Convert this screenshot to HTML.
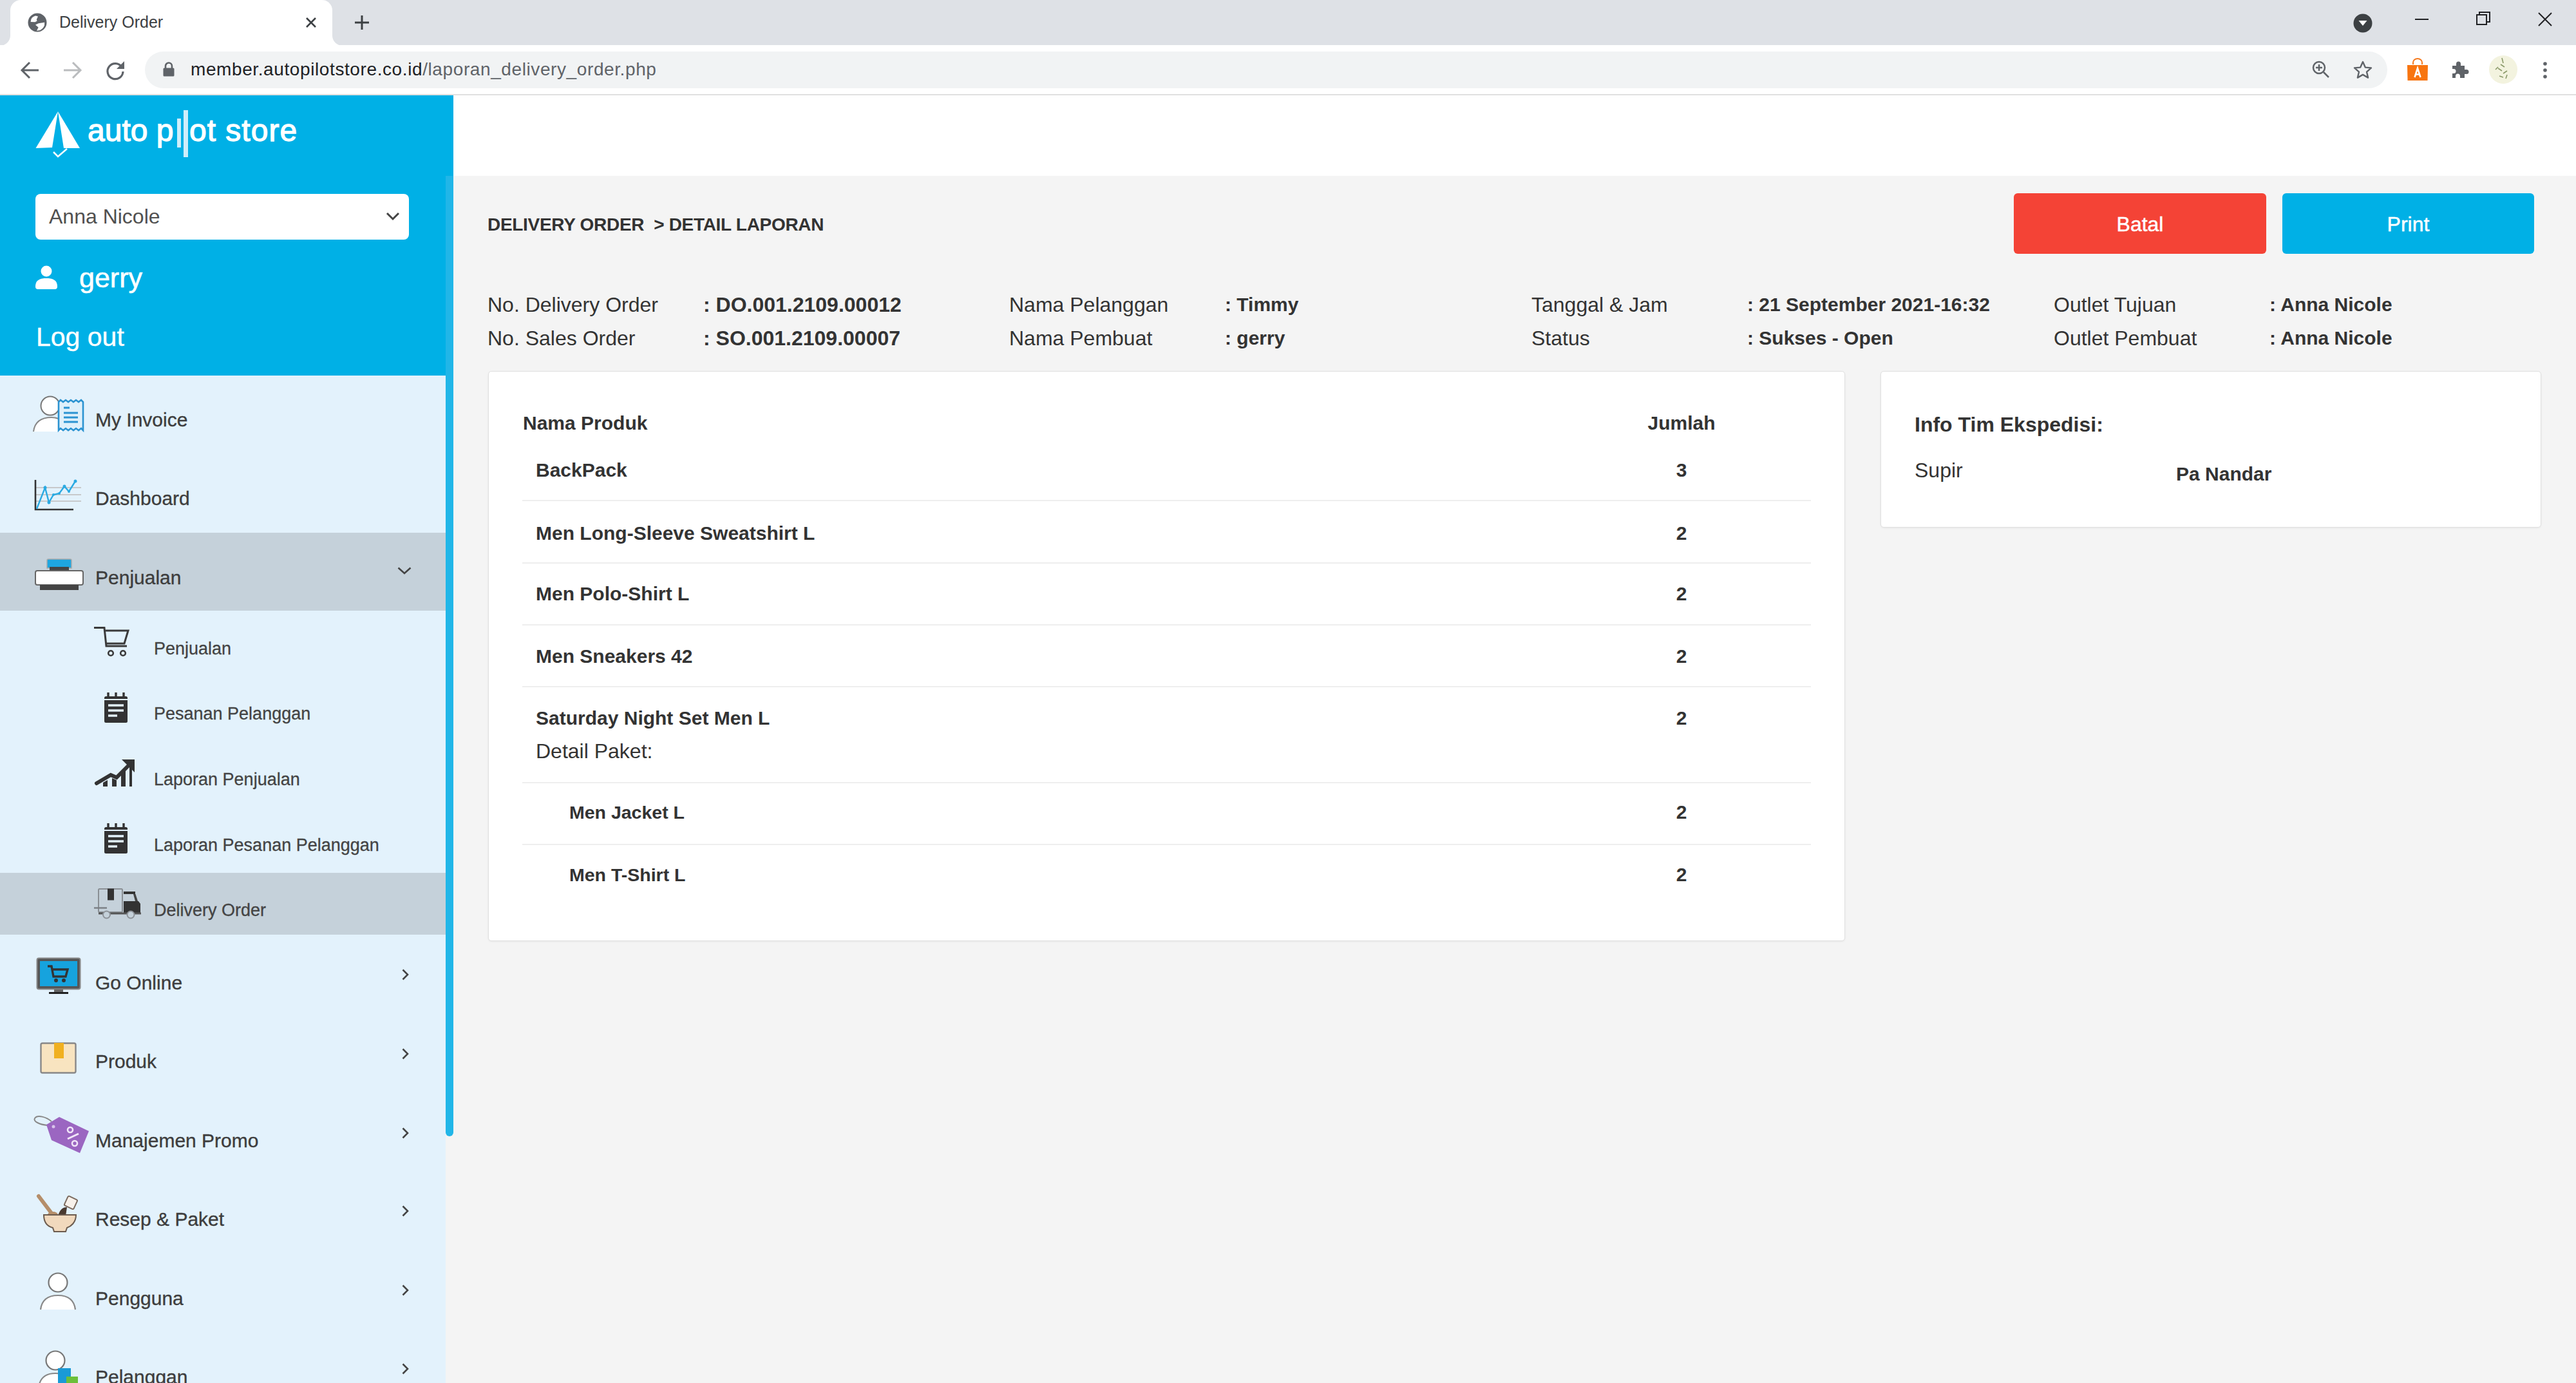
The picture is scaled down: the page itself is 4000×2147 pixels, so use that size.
<!DOCTYPE html><html><head><meta charset="utf-8"><title>Delivery Order</title><style>
*{margin:0;padding:0;box-sizing:border-box}
html,body{width:4000px;height:2147px;overflow:hidden;background:#f4f4f4;font-family:"Liberation Sans",sans-serif;position:relative}
.a{position:absolute}
.t{position:absolute;line-height:1;white-space:nowrap}
svg{position:absolute;overflow:visible}
</style></head><body>
<div class="a" style="left:0;top:0;width:4000px;height:70px;background:#dee1e6"></div>
<div class="a" style="left:16px;top:0;width:500px;height:71px;background:#fff;border-radius:16px 16px 0 0"></div>
<div class="a" style="left:0;top:54px;width:16px;height:17px;background:#fff"></div><div class="a" style="left:0;top:38px;width:16px;height:33px;background:#dee1e6;border-radius:0 0 16px 0"></div>
<div class="a" style="left:516px;top:54px;width:16px;height:17px;background:#fff"></div><div class="a" style="left:516px;top:38px;width:16px;height:33px;background:#dee1e6;border-radius:0 0 0 16px"></div>
<svg style="left:43px;top:20px" width="30" height="30" viewBox="0 0 30 30"><circle cx="15" cy="15" r="14.5" fill="#5f6368"/><path d="M4.6 14 L5.5 9.5 Q8 5.5 12.3 4.6 L16 5.6 L13.8 10.2 L14.6 12.6 L11.5 14.2 Z M12 18.6 L16.8 16.3 L26.2 14.8 L26 19.5 Q24 24.5 19 27 L14 27.8 L16.6 22.6 Z" fill="#fff"/></svg>
<div class="t" style="left:92px;top:22.3px;font-size:25px;color:#3c4043;">Delivery Order</div>
<svg style="left:474px;top:26px" width="18" height="18" viewBox="0 0 18 18"><path d="M2 2L16 16M16 2L2 16" stroke="#3c4043" stroke-width="2.6"/></svg>
<svg style="left:550px;top:23px" width="24" height="24" viewBox="0 0 24 24"><path d="M12 1V23M1 12H23" stroke="#3c4043" stroke-width="3"/></svg>
<svg style="left:3654px;top:21px" width="30" height="30" viewBox="0 0 30 30"><circle cx="15" cy="15" r="14.5" fill="#3c4043"/><path d="M8.5 11 H21.5 L15 19 Z" fill="#fff"/></svg>
<div class="a" style="left:3750px;top:29px;width:21px;height:2px;background:#202124"></div>
<svg style="left:3845px;top:18px" width="22" height="22" viewBox="0 0 22 22"><rect x="1" y="5" width="15" height="15" fill="none" stroke="#202124" stroke-width="2"/><path d="M5 5V1H21V16H16" fill="none" stroke="#202124" stroke-width="2"/></svg>
<svg style="left:3941px;top:19px" width="22" height="22" viewBox="0 0 22 22"><path d="M1 1L21 21M21 1L1 21" stroke="#202124" stroke-width="2"/></svg>
<div class="a" style="left:0;top:70px;width:4000px;height:77px;background:#fff"></div>
<div class="a" style="left:0;top:146px;width:4000px;height:2px;background:#e0e0e0"></div>
<svg style="left:31px;top:94px" width="30" height="30" viewBox="0 0 30 30"><path d="M29 15H3M15 3L3 15L15 27" fill="none" stroke="#5f6368" stroke-width="3"/></svg>
<svg style="left:98px;top:94px" width="30" height="30" viewBox="0 0 30 30"><path d="M1 15H27M15 3L27 15L15 27" fill="none" stroke="#babcbe" stroke-width="3"/></svg>
<svg style="left:164px;top:93px" width="30" height="32" viewBox="0 0 30 32"><path d="M25 11 A12 12 0 1 0 27 18" fill="none" stroke="#5f6368" stroke-width="3.2"/><path d="M29 2 V14 H17 Z" fill="#5f6368"/></svg>
<div class="a" style="left:225px;top:80px;width:3482px;height:57px;background:#f1f3f4;border-radius:29px"></div>
<svg style="left:253px;top:96px" width="18" height="23" viewBox="0 0 18 23"><path d="M4 10V6.5A5 5 0 0 1 14 6.5V10" fill="none" stroke="#5f6368" stroke-width="2.6"/><rect x="0.5" y="9.5" width="17" height="13" rx="1.5" fill="#5f6368"/></svg>
<div class="t" style="left:296px;top:94.3px;font-size:28px;letter-spacing:0.6px;color:#202124">member.autopilotstore.co.id<span style="color:#5f6368">/laporan_delivery_order.php</span></div>
<svg style="left:3590px;top:94px" width="28" height="28" viewBox="0 0 28 28"><circle cx="11" cy="11" r="9" fill="none" stroke="#5f6368" stroke-width="2.5"/><path d="M18 18L26 26M11 6V16M6 11H16" stroke="#5f6368" stroke-width="2.5"/></svg>
<svg style="left:3654px;top:94px" width="30" height="28" viewBox="0 0 30 28"><path d="M15 2L18.8 10.6L28 11.4L21 17.6L23.1 26.6L15 21.9L6.9 26.6L9 17.6L2 11.4L11.2 10.6Z" fill="none" stroke="#5f6368" stroke-width="2.4" stroke-linejoin="round"/></svg>
<svg style="left:3737px;top:91px" width="34" height="35" viewBox="0 0 34 35"><path d="M10 9V6A7 6 0 0 1 24 6V9" fill="none" stroke="#f57a1f" stroke-width="2"/><path d="M1 10H33L32.5 34H1.5Z" fill="#f87510"/><path d="M12.5 29L17 15L21.5 29M14 24.5H20" fill="none" stroke="#fff" stroke-width="2.6"/></svg>
<svg style="left:3805px;top:93px" width="30" height="30" viewBox="0 0 30 30"><path d="M3 9H9V6A3.5 3.5 0 0 1 16 6V9H22V15H25A3.5 3.5 0 0 1 25 22H22V28H15V25A3.5 3.5 0 0 0 8 25V28H3V21H5A3.5 3.5 0 0 0 5 14H3Z" fill="#5f6368"/></svg>
<div class="a" style="left:3865px;top:86px;width:44px;height:44px;border-radius:50%;background:#f3f3df"></div>
<svg style="left:3865px;top:86px" width="44" height="44" viewBox="0 0 44 44"><path d="M20 4L22 12M18 14L24 18M14 20L20 24M22 28L28 24M16 32L22 34M26 36L28 30M10 22L14 18" stroke="#8b9a6a" stroke-width="1.6"/></svg>
<svg style="left:3947px;top:95px" width="10" height="28" viewBox="0 0 10 28"><circle cx="5" cy="4" r="2.8" fill="#5f6368"/><circle cx="5" cy="14" r="2.8" fill="#5f6368"/><circle cx="5" cy="24" r="2.8" fill="#5f6368"/></svg>
<div class="a" style="left:704px;top:148px;width:3296px;height:125px;background:#fff"></div>
<div class="a" style="left:0;top:148px;width:704px;height:435px;background:#00b0e6"></div>
<div class="a" style="left:0;top:583px;width:692px;height:1564px;background:#e3f2fc"></div>
<div class="a" style="left:692px;top:273px;width:12px;height:1491px;background:#21b6e8;border-radius:0 0 6px 6px"></div>
<svg style="left:55px;top:172px" width="70" height="72" viewBox="0 0 70 72"><path d="M35 1 L69 58 L44 58 Z" fill="#fff"/><path d="M35 1 L26 57 L0.5 58 Z" fill="#fff"/><path d="M28 64 L35 71 L49 59" fill="none" stroke="#fff" stroke-width="2.5"/></svg>
<div class="t" style="left:136px;top:179px;font-size:48px;color:#fff;-webkit-text-stroke:1.3px #fff">auto p</div>
<div class="a" style="left:274.5px;top:183.5px;width:6px;height:45.5px;background:#cfeefa"></div>
<div class="a" style="left:285px;top:171px;width:6.5px;height:73px;background:#cfeefa"></div>
<div class="t" style="left:294px;top:179px;font-size:48px;letter-spacing:1px;color:#fff;-webkit-text-stroke:1.3px #fff">ot store</div>
<div class="a" style="left:55px;top:301px;width:580px;height:71px;background:#fff;border-radius:8px"></div>
<div class="t" style="left:76px;top:320.4px;font-size:32px;color:#505050;">Anna Nicole</div>
<svg style="left:599px;top:329px" width="22" height="14" viewBox="0 0 22 14"><path d="M2 2L11 11L20 2" fill="none" stroke="#444" stroke-width="3"/></svg>
<svg style="left:55px;top:412px" width="34" height="38" viewBox="0 0 34 38"><circle cx="17" cy="9" r="8.5" fill="#fff"/><path d="M0 33 C0 22 8 20 17 20 C26 20 34 22 34 33 Q34 37 30 37 H4 Q0 37 0 33Z" fill="#fff"/></svg>
<div class="t" style="left:123px;top:409.6px;font-size:43px;color:#fff;-webkit-text-stroke:0.6px #fff;">gerry</div>
<div class="t" style="left:56px;top:502.8px;font-size:41px;color:#fff;-webkit-text-stroke:0.4px #fff;">Log out</div>
<div class="a" style="left:0;top:827px;width:692px;height:121px;background:#c5d1da"></div>
<div class="a" style="left:0;top:1355px;width:692px;height:96px;background:#c5d1da"></div>
<div class="t" style="left:148px;top:637.2px;font-size:30px;color:#3d3d3d;-webkit-text-stroke:0.35px #3d3d3d;">My Invoice</div>
<div class="t" style="left:148px;top:759.1px;font-size:30px;color:#3d3d3d;-webkit-text-stroke:0.35px #3d3d3d;">Dashboard</div>
<div class="t" style="left:148px;top:881.6px;font-size:30px;color:#3d3d3d;-webkit-text-stroke:0.35px #3d3d3d;">Penjualan</div>
<div class="t" style="left:239px;top:994.1px;font-size:27px;color:#444;-webkit-text-stroke:0.3px #444;">Penjualan</div>
<div class="t" style="left:239px;top:1095.1px;font-size:27px;color:#444;-webkit-text-stroke:0.3px #444;">Pesanan Pelanggan</div>
<div class="t" style="left:239px;top:1197.1px;font-size:27px;color:#444;-webkit-text-stroke:0.3px #444;">Laporan Penjualan</div>
<div class="t" style="left:239px;top:1299.1px;font-size:27px;color:#444;-webkit-text-stroke:0.3px #444;">Laporan Pesanan Pelanggan</div>
<div class="t" style="left:239px;top:1400.1px;font-size:27px;color:#444;-webkit-text-stroke:0.3px #444;">Delivery Order</div>
<div class="t" style="left:148px;top:1510.6px;font-size:30px;color:#3d3d3d;-webkit-text-stroke:0.35px #3d3d3d;">Go Online</div>
<div class="t" style="left:148px;top:1632.6px;font-size:30px;color:#3d3d3d;-webkit-text-stroke:0.35px #3d3d3d;">Produk</div>
<div class="t" style="left:148px;top:1755.6px;font-size:30px;color:#3d3d3d;-webkit-text-stroke:0.35px #3d3d3d;">Manajemen Promo</div>
<div class="t" style="left:148px;top:1877.6px;font-size:30px;color:#3d3d3d;-webkit-text-stroke:0.35px #3d3d3d;">Resep &amp; Paket</div>
<div class="t" style="left:148px;top:2000.6px;font-size:30px;color:#3d3d3d;-webkit-text-stroke:0.35px #3d3d3d;">Pengguna</div>
<div class="t" style="left:148px;top:2122.6px;font-size:30px;color:#3d3d3d;-webkit-text-stroke:0.35px #3d3d3d;">Pelanggan</div>
<svg style="left:617px;top:880px" width="22" height="12" viewBox="0 0 22 12"><path d="M1.5 1.5L11 10L20.5 1.5" fill="none" stroke="#444" stroke-width="2.6"/></svg>
<svg style="left:624px;top:1504px" width="12" height="18" viewBox="0 0 12 18"><path d="M1.5 1.5L9 9L1.5 16.5" fill="none" stroke="#444" stroke-width="2.6"/></svg>
<svg style="left:624px;top:1627px" width="12" height="18" viewBox="0 0 12 18"><path d="M1.5 1.5L9 9L1.5 16.5" fill="none" stroke="#444" stroke-width="2.6"/></svg>
<svg style="left:624px;top:1750px" width="12" height="18" viewBox="0 0 12 18"><path d="M1.5 1.5L9 9L1.5 16.5" fill="none" stroke="#444" stroke-width="2.6"/></svg>
<svg style="left:624px;top:1871px" width="12" height="18" viewBox="0 0 12 18"><path d="M1.5 1.5L9 9L1.5 16.5" fill="none" stroke="#444" stroke-width="2.6"/></svg>
<svg style="left:624px;top:1994px" width="12" height="18" viewBox="0 0 12 18"><path d="M1.5 1.5L9 9L1.5 16.5" fill="none" stroke="#444" stroke-width="2.6"/></svg>
<svg style="left:624px;top:2116px" width="12" height="18" viewBox="0 0 12 18"><path d="M1.5 1.5L9 9L1.5 16.5" fill="none" stroke="#444" stroke-width="2.6"/></svg>
<svg style="left:50px;top:612px" width="84" height="62" viewBox="0 0 84 62"><circle cx="28" cy="18" r="14.5" fill="#fff" stroke="#777" stroke-width="2"/><path d="M2 58 C4 42 14 36 30 36 C40 36 46 40 48 44 L48 58 Z" fill="#fff"/><path d="M2 58 C4 42 14 36 30 36 C38 36 44 39 47 43" fill="none" stroke="#888" stroke-width="2"/><path d="M41 12 L44 9 L48 12 L52 9 L56 12 L60 9 L64 12 L68 9 L72 12 L76 9 L79 12 L79 56 L76 53 L72 56 L68 53 L64 56 L60 53 L56 56 L52 53 L48 56 L44 53 L41 56 Z" fill="#dff0fa" stroke="#2b93d1" stroke-width="2.6"/><path d="M49 21H58M49 29H71M49 36H71M49 43H71" stroke="#2b93d1" stroke-width="3"/></svg>
<svg style="left:52px;top:743px" width="78" height="52" viewBox="0 0 78 52"><path d="M4 14H74M4 25H74M4 35H74" stroke="#c7c9cb" stroke-width="2"/><path d="M3 2V48H62" fill="none" stroke="#333" stroke-width="2.6"/><path d="M5 47L18 14L24 37L31 25L40 23L48 12L55 20L65 4" fill="none" stroke="#2aaae2" stroke-width="2.4"/><g fill="#2aaae2"><circle cx="18" cy="14" r="2.5"/><circle cx="24" cy="37" r="2.5"/><circle cx="31" cy="25" r="2"/><circle cx="40" cy="23" r="2"/><circle cx="48" cy="12" r="2.5"/><circle cx="55" cy="20" r="2"/><circle cx="65" cy="4" r="2.5"/></g></svg>
<svg style="left:53px;top:866px" width="78" height="52" viewBox="0 0 78 52"><path d="M20 4 Q20 2 22 2 H56 Q58 2 58 4 V16 H20Z" fill="#1ea6e0" stroke="#aaa" stroke-width="1.5"/><rect x="24" y="14" width="30" height="6" fill="#444"/><rect x="2" y="20" width="74" height="22" rx="3" fill="#fff" stroke="#666" stroke-width="2"/><rect x="9" y="42" width="60" height="8" fill="#444"/></svg>
<svg style="left:145px;top:972px" width="58" height="48" viewBox="0 0 58 48"><path d="M1 2.5H17L20 31H52" fill="none" stroke="#3a3a3a" stroke-width="3"/><path d="M19 7H54L48 27H21" fill="none" stroke="#3a3a3a" stroke-width="3"/><circle cx="27" cy="42" r="3.8" fill="none" stroke="#3a3a3a" stroke-width="2.6"/><circle cx="46" cy="42" r="3.8" fill="none" stroke="#3a3a3a" stroke-width="2.6"/></svg>
<svg style="left:161px;top:1075px" width="38" height="48" viewBox="0 0 38 48"><rect x="1" y="6" width="36" height="41" rx="2.5" fill="#333"/><path d="M7 0V10M19 0V10M31 0V10" stroke="#333" stroke-width="3.4"/><path d="M1 11H37" stroke="#e3f2fc" stroke-width="2"/><path d="M7 20H31M7 28H31M7 36H21" stroke="#e3f2fc" stroke-width="3.6"/></svg>
<svg style="left:147px;top:1176px" width="64" height="46" viewBox="0 0 64 46"><path d="M3 40L25 27L34 31L56 9" fill="none" stroke="#333" stroke-width="6" stroke-linecap="round"/><path d="M42 3H62V23Z" fill="#333"/><path d="M13 45V39L20 35V45ZM27 45V32L34 35V45ZM41 45V27L48 20V45ZM54 45V15L58 11V45Z" fill="#333"/></svg>
<svg style="left:161px;top:1278px" width="38" height="48" viewBox="0 0 38 48"><rect x="1" y="6" width="36" height="41" rx="2.5" fill="#333"/><path d="M7 0V10M19 0V10M31 0V10" stroke="#333" stroke-width="3.4"/><path d="M1 11H37" stroke="#e3f2fc" stroke-width="2"/><path d="M7 20H31M7 28H31M7 36H21" stroke="#e3f2fc" stroke-width="3.6"/></svg>
<svg style="left:145px;top:1377px" width="76" height="52" viewBox="0 0 76 52"><rect x="8" y="3" width="37" height="36" rx="1.5" fill="none" stroke="#8a8f94" stroke-width="2"/><rect x="22" y="2.5" width="10" height="18" fill="#333"/><rect x="47" y="7" width="18" height="4" fill="#333"/><path d="M62 11H65.5L69 22H65Z" fill="#444"/><path d="M47 22H70L73 26V41H47Z" fill="#333"/><path d="M8 41H74" stroke="#555" stroke-width="3"/><path d="M1 32.5H21" stroke="#7a7f84" stroke-width="2.4"/><circle cx="20.5" cy="43" r="5.5" fill="#c5d1da" stroke="#8d9298" stroke-width="2"/><circle cx="58" cy="43" r="5.5" fill="#c5d1da" stroke="#8d9298" stroke-width="2"/></svg>
<svg style="left:56px;top:1486px" width="70" height="58" viewBox="0 0 70 58"><rect x="1.5" y="1.5" width="67" height="48" rx="3" fill="#555" stroke="#888" stroke-width="2"/><rect x="6" y="6" width="58" height="39" fill="#16a3de"/><path d="M18 14H24L27 30H46L49 19H25" fill="none" stroke="#333" stroke-width="3.4"/><circle cx="31" cy="36" r="3" fill="#333"/><circle cx="43" cy="36" r="3" fill="#333"/><rect x="28" y="50" width="14" height="5" fill="#666"/><rect x="20" y="54" width="30" height="3" fill="#222"/></svg>
<svg style="left:62px;top:1618px" width="58" height="50" viewBox="0 0 58 50"><rect x="1.5" y="1.5" width="54" height="46" rx="2.5" fill="#f8e4c0" stroke="#888" stroke-width="2.4"/><rect x="22" y="1" width="15" height="24" fill="#f0b020"/></svg>
<svg style="left:50px;top:1728px" width="92" height="66" viewBox="0 0 92 66"><path d="M30 13 C22 6 8 2 4 8 C1 13 12 18 24 19" fill="none" stroke="#888" stroke-width="2"/><path d="M22 18 L42 6 L88 28 L74 62 L30 42 Z" fill="#9b66c1"/><circle cx="33" cy="21" r="2.5" fill="#d8c4ea"/><path d="M55 40 L72 32" stroke="#f1e6f8" stroke-width="3"/><circle cx="59" cy="26" r="4" fill="none" stroke="#f1e6f8" stroke-width="2.6"/><circle cx="66" cy="47" r="4" fill="none" stroke="#f1e6f8" stroke-width="2.6"/></svg>
<svg style="left:56px;top:1852px" width="66" height="62" viewBox="0 0 66 62"><path d="M4 5 L26 34" stroke="#b58e6a" stroke-width="6" stroke-linecap="round"/><ellipse cx="26" cy="34" rx="8" ry="5" fill="#b58e6a"/><path d="M34 36 C36 28 40 22 48 22 L46 36Z" fill="#4a3a30"/><rect x="46" y="7" width="16" height="16" rx="2" transform="rotate(25 54 15)" fill="#f8f1ea" stroke="#7b6a5e" stroke-width="2"/><path d="M12 34 H62 C62 46 54 52 48 54 L46 60 H28 L26 54 C18 52 12 46 12 34Z" fill="#f1d9bd" stroke="#6b5b4e" stroke-width="2"/></svg>
<svg style="left:61px;top:1975px" width="58" height="60" viewBox="0 0 58 60"><circle cx="29" cy="16" r="14.5" fill="#fff" stroke="#777" stroke-width="2.2"/><path d="M2 58 C4 42 14 36 29 36 C44 36 54 42 56 58Z" fill="#fff"/><path d="M2 58 C4 42 14 36 29 36 C44 36 54 42 56 58" fill="none" stroke="#888" stroke-width="2.2"/></svg>
<svg style="left:58px;top:2096px" width="70" height="60" viewBox="0 0 70 60"><circle cx="28" cy="16" r="14.5" fill="#fff" stroke="#777" stroke-width="2.2"/><path d="M2 58 C4 42 14 36 28 36 C42 36 52 42 54 58Z" fill="#fff" stroke="#888" stroke-width="2.2"/><rect x="32" y="28" width="20" height="32" fill="#1a9ad6"/><rect x="45" y="41" width="18" height="20" fill="#6cbf3a"/></svg>
<div class="t" style="left:757px;top:334.9px;font-size:28px;color:#333;font-weight:700;letter-spacing:-0.3px;">DELIVERY ORDER &nbsp;&gt; DETAIL LAPORAN</div>
<div class="a" style="left:3127px;top:300px;width:392px;height:94px;background:#f44336;border-radius:6px"></div>
<div class="t" style="left:3127.0px;width:392px;text-align:center;top:332.3px;font-size:32px;color:#fff;-webkit-text-stroke:0.5px #fff;">Batal</div>
<div class="a" style="left:3544px;top:300px;width:391px;height:94px;background:#00b0e6;border-radius:6px"></div>
<div class="t" style="left:3544.0px;width:391px;text-align:center;top:332.3px;font-size:32px;color:#fff;-webkit-text-stroke:0.5px #fff;">Print</div>
<div class="t" style="left:757px;top:456.5px;font-size:32px;color:#333;">No. Delivery Order</div>
<div class="t" style="left:1092px;top:456.5px;font-size:32px;color:#333;font-weight:700;">: DO.001.2109.00012</div>
<div class="t" style="left:757px;top:508.6px;font-size:32px;color:#333;">No. Sales Order</div>
<div class="t" style="left:1092px;top:508.6px;font-size:32px;color:#333;font-weight:700;">: SO.001.2109.00007</div>
<div class="t" style="left:1567px;top:456.5px;font-size:32px;color:#333;">Nama Pelanggan</div>
<div class="t" style="left:1902px;top:458.2px;font-size:30px;color:#333;font-weight:700;">: Timmy</div>
<div class="t" style="left:1567px;top:508.6px;font-size:32px;color:#333;">Nama Pembuat</div>
<div class="t" style="left:1902px;top:510.3px;font-size:30px;color:#333;font-weight:700;">: gerry</div>
<div class="t" style="left:2378px;top:456.5px;font-size:32px;color:#333;">Tanggal &amp; Jam</div>
<div class="t" style="left:2713px;top:458.2px;font-size:30px;color:#333;font-weight:700;">: 21 September 2021-16:32</div>
<div class="t" style="left:2378px;top:508.6px;font-size:32px;color:#333;">Status</div>
<div class="t" style="left:2713px;top:510.3px;font-size:30px;color:#333;font-weight:700;">: Sukses - Open</div>
<div class="t" style="left:3189px;top:456.5px;font-size:32px;color:#333;">Outlet Tujuan</div>
<div class="t" style="left:3524px;top:458.2px;font-size:30px;color:#333;font-weight:700;">: Anna Nicole</div>
<div class="t" style="left:3189px;top:508.6px;font-size:32px;color:#333;">Outlet Pembuat</div>
<div class="t" style="left:3524px;top:510.3px;font-size:30px;color:#333;font-weight:700;">: Anna Nicole</div>
<div class="a" style="left:758px;top:576px;width:2107px;height:885px;background:#fff;border:1.5px solid #e0e0e0;border-radius:5px;box-shadow:0 1px 3px rgba(0,0,0,0.06)"></div>
<div class="t" style="left:812px;top:641.6px;font-size:30px;color:#333;font-weight:700;">Nama Produk</div>
<div class="t" style="left:2461.0px;width:300px;text-align:center;top:641.6px;font-size:30px;color:#333;font-weight:700;">Jumlah</div>
<div class="t" style="left:832px;top:714.6px;font-size:30px;color:#333;font-weight:700;">BackPack</div>
<div class="t" style="left:2561.0px;width:100px;text-align:center;top:714.6px;font-size:30px;color:#333;font-weight:700;">3</div>
<div class="t" style="left:832px;top:812.6px;font-size:30px;color:#333;font-weight:700;">Men Long-Sleeve Sweatshirt L</div>
<div class="t" style="left:2561.0px;width:100px;text-align:center;top:812.6px;font-size:30px;color:#333;font-weight:700;">2</div>
<div class="t" style="left:832px;top:907.2px;font-size:30px;color:#333;font-weight:700;">Men Polo-Shirt L</div>
<div class="t" style="left:2561.0px;width:100px;text-align:center;top:907.2px;font-size:30px;color:#333;font-weight:700;">2</div>
<div class="t" style="left:832px;top:1004.2px;font-size:30px;color:#333;font-weight:700;">Men Sneakers 42</div>
<div class="t" style="left:2561.0px;width:100px;text-align:center;top:1004.2px;font-size:30px;color:#333;font-weight:700;">2</div>
<div class="t" style="left:832px;top:1100.1px;font-size:30px;color:#333;font-weight:700;">Saturday Night Set Men L</div>
<div class="t" style="left:2561.0px;width:100px;text-align:center;top:1100.1px;font-size:30px;color:#333;font-weight:700;">2</div>
<div class="t" style="left:884px;top:1247.3px;font-size:28.5px;color:#333;font-weight:700;">Men Jacket L</div>
<div class="t" style="left:2561.0px;width:100px;text-align:center;top:1246.0px;font-size:30px;color:#333;font-weight:700;">2</div>
<div class="t" style="left:884px;top:1343.9px;font-size:28.5px;color:#333;font-weight:700;">Men T-Shirt L</div>
<div class="t" style="left:2561.0px;width:100px;text-align:center;top:1342.6px;font-size:30px;color:#333;font-weight:700;">2</div>
<div class="t" style="left:832px;top:1150.3px;font-size:32px;color:#333;">Detail Paket:</div>
<div class="a" style="left:811px;top:776px;width:2001px;height:2px;background:#eeeeee"></div>
<div class="a" style="left:811px;top:873px;width:2001px;height:2px;background:#eeeeee"></div>
<div class="a" style="left:811px;top:969px;width:2001px;height:2px;background:#eeeeee"></div>
<div class="a" style="left:811px;top:1065px;width:2001px;height:2px;background:#eeeeee"></div>
<div class="a" style="left:811px;top:1213.6px;width:2001px;height:2px;background:#eeeeee"></div>
<div class="a" style="left:811px;top:1310px;width:2001px;height:2px;background:#eeeeee"></div>
<div class="a" style="left:2920px;top:576px;width:1026px;height:243px;background:#fff;border:1.5px solid #e0e0e0;border-radius:5px;box-shadow:0 1px 3px rgba(0,0,0,0.06)"></div>
<div class="t" style="left:2973px;top:642.9px;font-size:32px;color:#333;font-weight:700;">Info Tim Ekspedisi:</div>
<div class="t" style="left:2973px;top:713.9px;font-size:32px;color:#333;">Supir</div>
<div class="t" style="left:3379px;top:721.0px;font-size:30px;color:#333;font-weight:700;">Pa Nandar</div>
</body></html>
